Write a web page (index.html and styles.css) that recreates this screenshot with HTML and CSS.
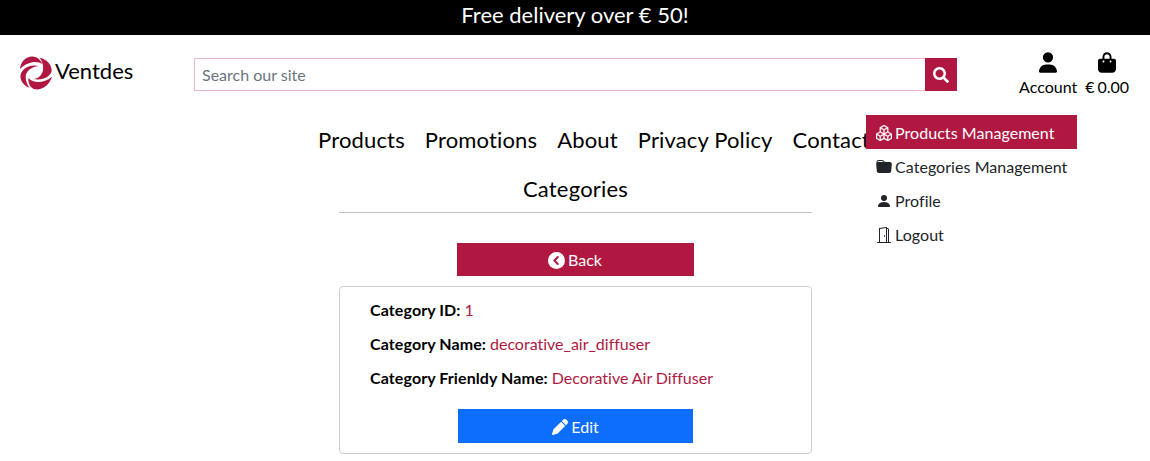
FILE: index.html
```
<!DOCTYPE html>
<html lang="en">
<head>
<meta charset="utf-8">
<title>Ventdes</title>
<link rel="stylesheet" href="styles.css">
</head>
<body>
<div class="banner">Free delivery over € 50!</div>
<header class="header">
  <a class="brand">
    <svg class="logo" viewBox="6 4 96 102" preserveAspectRatio="none">
      <path d="M6 43C8 18 28 2 48 6C60 8 68 16 74 29C58 18 32 18 6 43Z"/>
      <path d="M65 9C88 14 101 30 101 48C98 65 74 79 46 73C74 71 86 38 65 9Z"/>
      <path d="M102 66C94 91 74 106 52 104C38 102 30 88 31 70C45 86 76 88 102 66Z"/>
      <path d="M35 100C12 93 2 68 10 54C18 38 40 28 62 34C38 37 24 50 23 66C23 80 28 91 35 100Z"/>
    </svg>
    <span>Ventdes</span>
  </a>
  <form class="search">
    <input class="search-input" type="text" placeholder="Search our site">
    <button class="search-button" type="button" aria-label="Search">
      <svg class="icon" viewBox="0 0 512 512"><path d="M505 442.7L405.3 343c-4.5-4.5-10.6-7-17-7H372c27.6-35.3 44-79.7 44-128C416 93.1 322.9 0 208 0S0 93.1 0 208s93.1 208 208 208c48.3 0 92.7-16.4 128-44v16.3c0 6.4 2.5 12.5 7 17l99.7 99.7c9.4 9.4 24.6 9.4 33.9 0l28.3-28.3c9.4-9.4 9.4-24.6.1-34zM208 336c-70.7 0-128-57.2-128-128 0-70.7 57.2-128 128-128 70.7 0 128 57.2 128 128 0 70.7-57.2 128-128 128z"/></svg>
    </button>
  </form>
  <div class="actions">
    <a class="action">
      <svg class="action-icon" viewBox="0 0 448 512"><path d="M224 256A128 128 0 1 0 224 0a128 128 0 1 0 0 256zm-45.700 48C79.800 304 0 383.800 0 482.300C0 498.700 13.300 512 29.700 512H418.300c16.400 0 29.700-13.300 29.700-29.700C448 383.800 368.200 304 269.700 304H178.300z"/></svg>
      <span>Account</span>
    </a>
    <a class="action">
      <svg class="action-icon" viewBox="0 0 448 512"><path d="M112 112C112 50.140 162.100 0 224 0C285.900 0 336 50.140 336 112V160H400C426.500 160 448 181.500 448 208V416C448 469 405 512 352 512H96C42.980 512 0 469 0 416V208C0 181.500 21.490 160 48 160H112V112zM160 160H288V112C288 76.650 259.300 48 224 48C188.700 48 160 76.650 160 112V160zM136 256C149.300 256 160 245.300 160 232C160 218.700 149.300 208 136 208C122.700 208 112 218.700 112 232C112 245.300 122.700 256 136 256zM312 208C298.700 208 288 218.700 288 232C288 245.300 298.700 256 312 256C325.300 256 336 245.300 336 232C336 218.700 325.300 208 312 208z"/></svg>
      <span class="total">€ 0.00</span>
    </a>
    <div class="menu">
      <a class="menu-item active"><svg class="icon boxes" viewBox="0 0 16 16"><path d="M7.752.066a.5.5 0 0 1 .496 0l3.750 2.143a.5.5 0 0 1 .252.434v3.995l3.498 2A.5.5 0 0 1 16 9.070v4.286a.5.5 0 0 1-.252.434l-3.750 2.143a.5.5 0 0 1-.496 0l-3.502-2-3.502 2.001a.5.5 0 0 1-.496 0l-3.750-2.143A.5.5 0 0 1 0 13.357V9.071a.5.5 0 0 1 .252-.434L3.750 6.638V2.643a.5.5 0 0 1 .252-.434L7.752.066ZM4.250 7.504 1.508 9.071l2.742 1.567 2.742-1.567L4.250 7.504ZM7.500 9.933l-2.750 1.571v3.134l2.750-1.571V9.933Zm1 3.134 2.750 1.571v-3.134L8.500 9.933v3.134Zm.508-3.996 2.742 1.567 2.742-1.567-2.742-1.567-2.742 1.567Zm2.242-2.433V3.504L8.500 5.076V8.210l2.750-1.572ZM7.500 8.210V5.076L4.750 3.504v3.134L7.500 8.210ZM5.258 2.643 8 4.210l2.742-1.567L8 1.076 5.258 2.643ZM15 9.933l-2.750 1.571v3.134L15 13.067V9.933ZM3.750 14.638v-3.134L1 9.933v3.134l2.750 1.571Z"/></svg>Products Management</a>
      <a class="menu-item"><svg class="icon" viewBox="0 0 16 16"><path d="M9.828 3h3.982a2 2 0 0 1 1.992 2.181l-.637 7A2 2 0 0 1 13.174 14H2.825a2 2 0 0 1-1.991-1.819l-.637-7a1.990 1.990 0 0 1 .342-1.310L.5 3a2 2 0 0 1 2-2h3.672a2 2 0 0 1 1.414.586l.828.828A2 2 0 0 0 9.828 3zm-8.322.120C1.720 3.042 1.950 3 2.190 3h5.396l-.707-.707A1 1 0 0 0 6.172 2H2.500a1 1 0 0 0-1 .981l.006.139z"/></svg>Categories Management</a>
      <a class="menu-item"><svg class="icon" viewBox="0 0 16 16"><path d="M3 14s-1 0-1-1 1-4 6-4 6 3 6 4-1 1-1 1H3zm5-6a3 3 0 1 0 0-6 3 3 0 0 0 0 6z"/></svg>Profile</a>
      <a class="menu-item"><svg class="icon" viewBox="0 0 16 16"><path d="M8.500 10c-.276 0-.5-.448-.5-1s.224-1 .5-1 .5.448.5 1-.224 1-.5 1z"/><path d="M10.828.122A.5.5 0 0 1 11 .5V1h.5A1.500 1.500 0 0 1 13 2.500V15h1.500a.5.5 0 0 1 0 1h-13a.5.5 0 0 1 0-1H3V1.500a.5.5 0 0 1 .430-.495l7-1a.5.5 0 0 1 .398.117zM11.500 2H11v13h1V2.500a.5.5 0 0 0-.5-.5zM4 1.934V15h6V1.077l-6 .857z"/></svg>Logout</a>
    </div>
  </div>
</header>
<nav class="nav"><a>Products</a><a>Promotions</a><a>About</a><a>Privacy Policy</a><a>Contact</a></nav>
<main class="content">
  <h1 class="title">Categories</h1>
  <a class="button back"><svg class="icon" viewBox="0 0 512 512"><circle cx="256" cy="256" r="256"/><path class="chevron" d="M296 152L192 256l104 104"/></svg><span>Back</span></a>
  <section class="card">
    <p class="field"><strong>Category ID:</strong> <span class="value">1</span></p>
    <p class="field"><strong>Category Name:</strong> <span class="value">decorative_air_diffuser</span></p>
    <p class="field"><strong>Category Frienldy Name:</strong> <span class="value">Decorative Air Diffuser</span></p>
    <a class="button edit"><svg class="icon" viewBox="0 0 512 512"><path d="M362.700 19.300L314.300 67.700 444.300 197.700l48.400-48.400c25-25 25-65.500 0-90.500L453.300 19.300c-25-25-65.500-25-90.500 0zm-71 71L58.600 323.500c-10.400 10.400-18 23.300-22.200 37.400L1 481.200C-1.500 489.700 .8 498.800 7 505s15.300 8.500 23.700 6.100l120.300-35.400c14.100-4.200 27-11.800 37.400-22.200L421.700 220.300 291.700 90.300z"/></svg><span>Edit</span></a>
  </section>
</main>
</body>
</html>
```
FILE: styles.css
```
* { box-sizing: border-box; }
body {
  margin: 0;
  height: 461px;
  overflow: hidden;
  background: #fff;
  color: #000;
  font: 16px/24px Lato, "Liberation Sans", sans-serif;
  font-variant-ligatures: none;
}
svg { display: block; fill: currentColor; flex: none; }
.icon { width: 16px; height: 16px; }
.boxes { stroke: currentColor; stroke-width: .3; }
.banner {
  height: 35px;
  background: #000;
  color: #fff;
  font-size: 22px;
  line-height: 29px;
  text-align: center;
}
.header {
  display: flex;
  height: 80px;
  padding: 0 21px 0 20px;
}
.brand {
  display: flex;
  width: 174px;
  height: 34px;
  margin-top: 20px;
  gap: 3px;
  font-size: 22px;
  line-height: 31px;
}
.logo { width: 32px; height: 34px; margin-top: 1px; color: #b01842; }
.search { display: flex; width: 763px; height: 33px; margin-top: 23px; }
.search-input {
  flex: 1;
  min-width: 0;
  padding: 0 7px;
  border: 1px solid #ebbac8;
  border-right: 0;
  border-radius: 0;
  font: inherit;
}
.search-input::placeholder { color: #6c757d; }
.search-button {
  display: flex;
  align-items: center;
  justify-content: center;
  width: 32px;
  padding: 0;
  border: 0;
  background: #b01842;
  color: #fff;
}
.actions { position: relative; display: flex; gap: 8px; margin-left: auto; padding-top: 17px; }
.action { display: flex; flex-direction: column; align-items: center; }
.action-icon { width: 18px; height: 21px; margin-bottom: 2px; }
.total { word-spacing: -1.2px; }
.menu { position: absolute; top: 80px; right: 52px; width: 211px; }
.menu-item {
  display: flex;
  align-items: center;
  gap: 3px;
  height: 34px;
  padding: 2px 10px 0;
  color: #212529;
  background: #fff;
  letter-spacing: .05px;
  white-space: nowrap;
}
.menu-item.active { background: #b01842; color: #fff; }
.nav {
  display: flex;
  justify-content: center;
  gap: 20px;
  height: 49px;
  padding: 8px 0 0 38px;
  font-size: 22px;
  letter-spacing: .15px;
  line-height: 33px;
}
.content { display: flex; flex-direction: column; align-items: center; width: 473px; margin: 0 auto 0 339px; }
.title {
  width: 100%;
  height: 49px;
  margin: 0 0 30px;
  border-bottom: 1px solid #bfbfbf;
  font-size: 22px;
  font-weight: 400;
  letter-spacing: .2px;
  line-height: 49px;
  text-align: center;
}
.button { display: flex; align-items: center; justify-content: center; gap: 3px; color: #fff; padding-top: 2px; }
.back { width: 237px; height: 33px; background: #b01842; padding: 1px 1px 0 0; }
.back .icon { width: 17px; height: 17px; }
.chevron { fill: none; stroke: #b01842; stroke-width: 60; stroke-linecap: round; stroke-linejoin: round; }
.card { width: 100%; height: 168px; margin-top: 10px; padding: 11px 30px 0; border: 1px solid #cfcfcf; border-radius: 4px; }
.field { margin: 0 0 10px; word-spacing: -.2px; white-space: nowrap; }
.field strong { letter-spacing: .11px; }
.value { color: #b01842; }
.edit { width: 235px; height: 34px; margin: 19px auto 0; background: #0d6efd; }
```
